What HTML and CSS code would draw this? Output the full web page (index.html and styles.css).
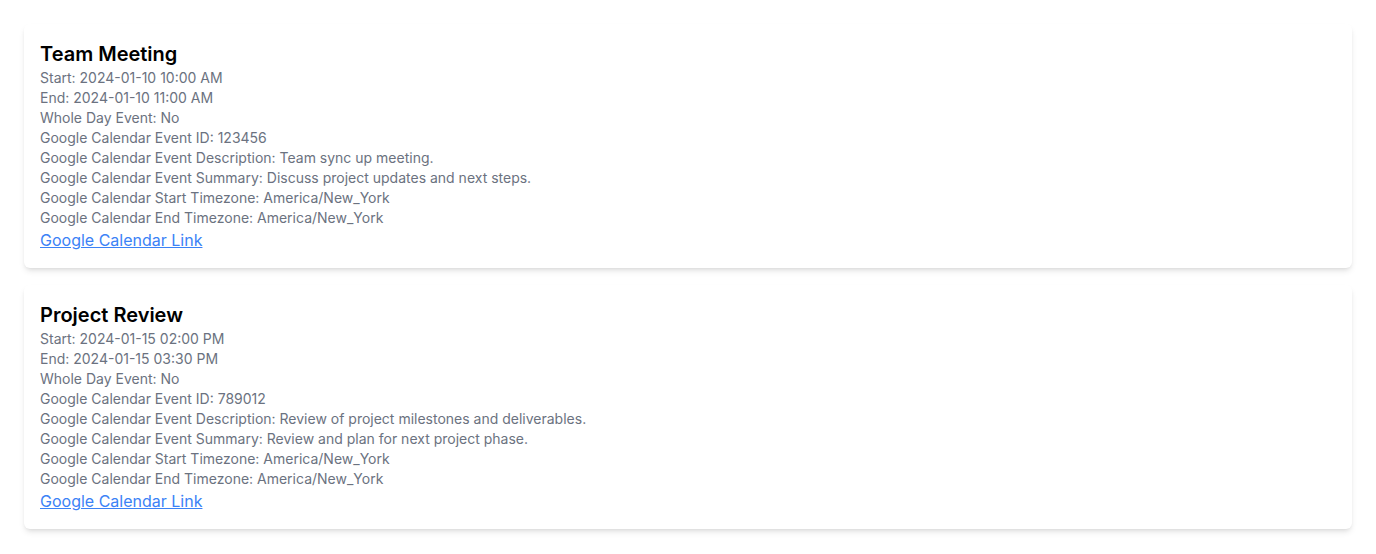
FILE: index.html
```html
<!DOCTYPE html>
<html>
<head>
<meta charset="utf-8">
<link rel="stylesheet" href="styles.css">
</head>
<body>
<div class="list">
  <div class="card">
    <h2 class="title">Team Meeting</h2>
    <p class="line">Start: 2024-01-10 10:00 AM</p>
    <p class="line">End: 2024-01-10 11:00 AM</p>
    <p class="line">Whole Day Event: No</p>
    <p class="line">Google Calendar Event ID: 123456</p>
    <p class="line">Google Calendar Event Description: Team sync up meeting.</p>
    <p class="line">Google Calendar Event Summary: Discuss project updates and next steps.</p>
    <p class="line">Google Calendar Start Timezone: America/New_York</p>
    <p class="line">Google Calendar End Timezone: America/New_York</p>
    <a class="link" href="#">Google Calendar Link</a>
  </div>
  <div class="card">
    <h2 class="title">Project Review</h2>
    <p class="line">Start: 2024-01-15 02:00 PM</p>
    <p class="line">End: 2024-01-15 03:30 PM</p>
    <p class="line">Whole Day Event: No</p>
    <p class="line">Google Calendar Event ID: 789012</p>
    <p class="line">Google Calendar Event Description: Review of project milestones and deliverables.</p>
    <p class="line">Google Calendar Event Summary: Review and plan for next project phase.</p>
    <p class="line">Google Calendar Start Timezone: America/New_York</p>
    <p class="line">Google Calendar End Timezone: America/New_York</p>
    <a class="link" href="#">Google Calendar Link</a>
  </div>
</div>
</body>
</html>
```
FILE: styles.css
```css
* { box-sizing: border-box; }
html, body { margin: 0; padding: 0; background: #fff; }
body { font-family: Inter, "Noto Sans", sans-serif; }
.list {
  padding: 24px;
  display: flex;
  flex-direction: column;
  gap: 17px;
}
.card {
  background: #fff;
  border-radius: 6px;
  padding: 16px;
  box-shadow: 0 4px 6px -1px rgba(0,0,0,0.1), 0 2px 4px -2px rgba(0,0,0,0.1);
  display: flex;
  flex-direction: column;
  align-items: flex-start;
}
.title {
  margin: 0;
  font-size: 20px;
  line-height: 28px;
  font-weight: 600;
  color: #000;
}
.line {
  margin: 0;
  font-size: 14px;
  line-height: 20px;
  color: #6b7280;
}
.link {
  font-size: 16px;
  line-height: 24px;
  color: #3b82f6;
  text-decoration: underline;
}
```
